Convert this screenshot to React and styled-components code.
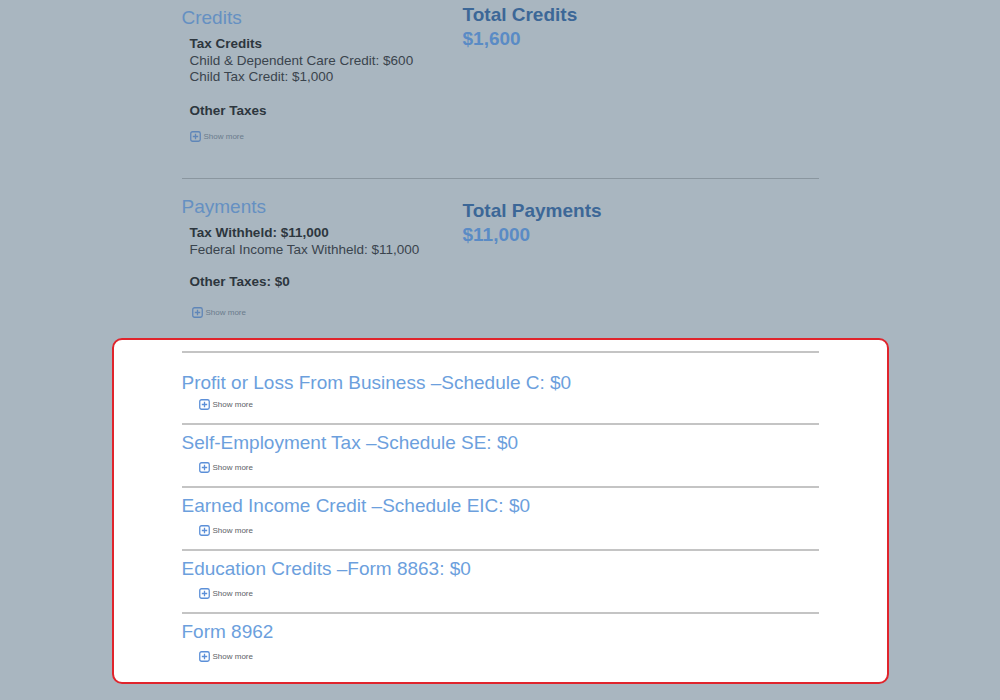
import React from 'react'
import styled, { createGlobalStyle } from 'styled-components'

const Global = createGlobalStyle`
  body {
    margin: 0;
    background: #a9b6c0;
    font-family: "Liberation Sans", Arial, sans-serif;
  }
`

const Page = styled.div`
  width: 637px;
  margin: 0 auto;
  padding-top: 6px;
`

const Section = styled.div`
  display: grid;
  grid-template-columns: 281px 1fr;
  padding-bottom: ${p => p.$pb || 0}px;
  border-bottom: ${p => (p.$line ? '1px solid #8a969f' : 'none')};
`

const Left = styled.div`
  display: flex;
  flex-direction: column;
  padding-top: ${p => p.$pt || 0}px;
`

const Right = styled.div`
  padding-top: ${p => p.$pt || 0}px;
`

const Title = styled.div`
  font-size: 19px;
  line-height: 24px;
  color: ${p => (p.$dim ? '#6590c2' : '#6c9fdd')};
`

const Details = styled.div`
  padding-left: 8px;
  font-size: 13.5px;
  line-height: 16.5px;
  color: #3a444d;
`

const Bold = styled.div`
  font-weight: bold;
  color: #2d363e;
  margin-top: ${p => p.$mt || 0}px;
`

const Total = styled.div`
  font-weight: bold;
  font-size: 19px;
  line-height: 18px;
  color: #3c6797;
`

const Amount = styled.div`
  margin-top: 3px;
  font-weight: bold;
  font-size: 19px;
  line-height: 24px;
  color: #5a8bc5;
`

const More = styled.div`
  display: flex;
  align-items: center;
  gap: 3px;
  height: 12px;
  margin-top: ${p => p.$mt || 0}px;
  padding-left: ${p => p.$indent || 0}px;
  font-size: 8px;
  color: ${p => (p.$dim ? '#6a7c8c' : '#5b6166')};
`

const Highlight = styled.div`
  margin: 0 -70px;
  padding: 11px 68px 7px;
  background: #fff;
  border: 2px solid #e0242c;
  border-radius: 10px;
`

const Item = styled.div`
  border-top: 2px solid #c4c4c4;
  padding: ${p => (p.$first ? 18 : 6)}px 0 12px;
`

const PlusIcon = ({ color }) => (
  <svg width="11" height="11" viewBox="0 0 11 11">
    <rect x="0.75" y="0.75" width="9.5" height="9.5" rx="1.8" fill="none" stroke={color} strokeWidth="1.3" />
    <path d="M5.5 2.8v5.4M2.8 5.5h5.4" stroke={color} strokeWidth="1.3" />
  </svg>
)

const ShowMore = ({ dim, indent, mt }) => (
  <More $dim={dim} $indent={indent} $mt={mt}>
    <PlusIcon color={dim ? '#5f86b8' : '#5b8fd8'} />
    <span>Show more</span>
  </More>
)

const forms = [
  'Profit or Loss From Business \u2013Schedule C: $0',
  'Self-Employment Tax \u2013Schedule SE: $0',
  'Earned Income Credit \u2013Schedule EIC: $0',
  'Education Credits \u2013Form 8863: $0',
  'Form 8962',
]

export default function App() {
  return (
    <>
      <Global />
      <Page>
        <Section $line $pb={36}>
          <Left>
            <Title $dim>Credits</Title>
            <Details>
              <Bold $mt={6}>Tax Credits</Bold>
              <div>Child &amp; Dependent Care Credit: $600</div>
              <div>Child Tax Credit: $1,000</div>
              <Bold $mt={17}>Other Taxes</Bold>
            </Details>
            <ShowMore dim indent={8} mt={11} />
          </Left>
          <Right>
            <Total>Total Credits</Total>
            <Amount>$1,600</Amount>
          </Right>
        </Section>
        <Section $pb={19}>
          <Left $pt={16}>
            <Title $dim>Payments</Title>
            <Details>
              <Bold $mt={6}>Tax Withheld: $11,000</Bold>
              <div>Federal Income Tax Withheld: $11,000</div>
              <Bold $mt={16}>Other Taxes: $0</Bold>
            </Details>
            <ShowMore dim indent={10} mt={16} />
          </Left>
          <Right $pt={23}>
            <Total>Total Payments</Total>
            <Amount>$11,000</Amount>
          </Right>
        </Section>
        <Highlight>
          {forms.map((f, i) => (
            <Item key={f} $first={i === 0}>
              <Title>{f}</Title>
              <ShowMore indent={17} mt={i === 0 ? 4 : 7} />
            </Item>
          ))}
        </Highlight>
      </Page>
    </>
  )
}
